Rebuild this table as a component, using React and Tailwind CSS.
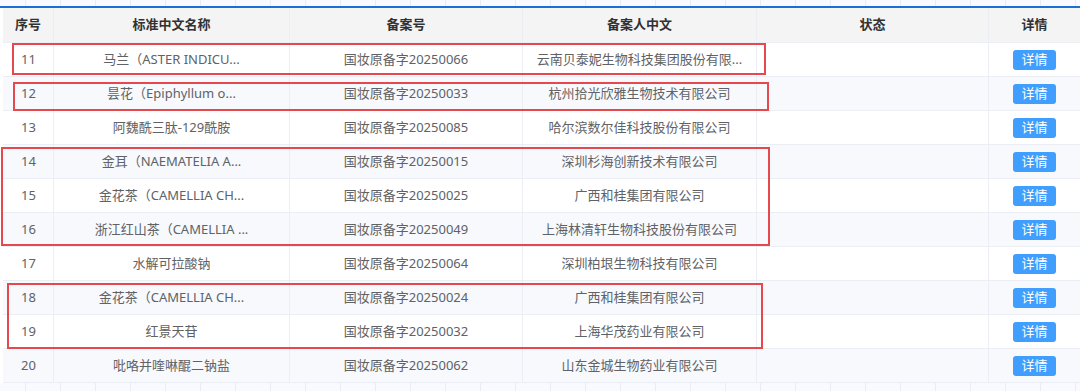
const rows = [
  ["11", "马兰（ASTER INDICU...", "国妆原备字20250066", "云南贝泰妮生物科技集团股份有限..."],
  ["12", "昙花（Epiphyllum o...", "国妆原备字20250033", "杭州拾光欣雅生物技术有限公司"],
  ["13", "阿魏酰三肽-129酰胺", "国妆原备字20250085", "哈尔滨数尔佳科技股份有限公司"],
  ["14", "金耳（NAEMATELIA A...", "国妆原备字20250015", "深圳杉海创新技术有限公司"],
  ["15", "金花茶（CAMELLIA CH...", "国妆原备字20250025", "广西和桂集团有限公司"],
  ["16", "浙江红山茶（CAMELLIA ...", "国妆原备字20250049", "上海林清轩生物科技股份有限公司"],
  ["17", "水解可拉酸钠", "国妆原备字20250064", "深圳柏垠生物科技有限公司"],
  ["18", "金花茶（CAMELLIA CH...", "国妆原备字20250024", "广西和桂集团有限公司"],
  ["19", "红景天苷", "国妆原备字20250032", "上海华茂药业有限公司"],
  ["20", "吡咯并喹啉醌二钠盐", "国妆原备字20250062", "山东金城生物药业有限公司"],
];

const boxes = [
  "left-[12px] top-[43px] w-[754px] h-[32px]",
  "left-[13px] top-[82px] w-[756px] h-[29px]",
  "left-[1px] top-[147px] w-[769px] h-[99px]",
  "left-[7px] top-[283px] w-[756px] h-[66px]",
];

function Strip({ h }) {
  return (
    <div className={`flex ${h} bg-[#f8faff] pl-[3px]`}>
      {Array.from({ length: 31 }).map((_, i) => (
        <div key={i} className={`${i === 0 ? "w-[23px]" : "w-[35px]"} shrink-0 border-r border-[#e8ecf3]`} />
      ))}
    </div>
  );
}

export default function App() {
  return (
    <div className="relative w-[1080px] h-[391px] overflow-hidden bg-white text-[13px] font-['Noto_Sans','Noto_Sans_CJK_SC',sans-serif]">
      <Strip h="h-[6px]" />
      <div className="h-[2px] bg-[#1a6fd4]" />
      <div className="ml-[3px]">
        <div className="flex h-[35px] items-center bg-[#f4f4f5] font-bold text-[#303133] border-b border-[#ebeef5]">
          <div className="w-[51px] h-full flex items-center pl-[12px] border-r border-[#ebeef5]">序号</div>
          <div className="w-[236px] h-full flex items-center justify-center border-r border-[#ebeef5]">标准中文名称</div>
          <div className="w-[233px] h-full flex items-center justify-center border-r border-[#ebeef5]">备案号</div>
          <div className="w-[234px] h-full flex items-center justify-center border-r border-[#ebeef5]">备案人中文</div>
          <div className="w-[232px] h-full flex items-center justify-center border-r border-[#ebeef5]">状态</div>
          <div className="flex-1 h-full flex items-center justify-center">详情</div>
        </div>
        {rows.map((r, i) => (
          <div key={r[0]} className={`flex h-[34px] items-center text-[#606266] border-b border-[#ebeef5] ${i % 2 ? "bg-[#f7f9fd]" : "bg-white"}`}>
            <div className="w-[51px] h-full flex items-center pl-[18px] border-r border-[#ebeef5]">{r[0]}</div>
            <div className="w-[236px] h-full flex items-center justify-center border-r border-[#ebeef5]">{r[1]}</div>
            <div className="w-[233px] h-full flex items-center justify-center border-r border-[#ebeef5]">{r[2]}</div>
            <div className="w-[234px] h-full flex items-center justify-center border-r border-[#ebeef5]">{r[3]}</div>
            <div className="w-[232px] h-full border-r border-[#ebeef5]" />
            <div className="flex-1 h-full flex items-center justify-center">
              <button className="w-[43px] h-[20px] rounded-[3px] bg-[#409eff] text-white text-[13px] leading-none">详情</button>
            </div>
          </div>
        ))}
      </div>
      <Strip h="h-[10px]" />
      {boxes.map((b) => (
        <div key={b} className={`absolute ${b} border-2 border-[#e5484d] pointer-events-none`} />
      ))}
    </div>
  );
}
